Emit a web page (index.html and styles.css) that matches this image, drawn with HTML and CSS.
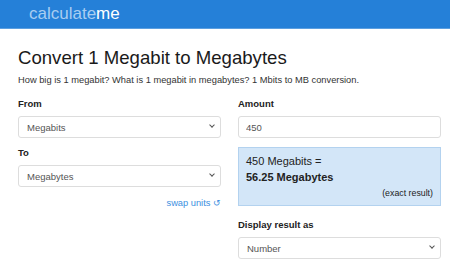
FILE: index.html
```html
<!DOCTYPE html>
<html lang="en">
<head>
  <meta charset="UTF-8" />
  <title>Convert 1 Megabit to Megabytes</title>
  <link rel="stylesheet" href="styles.css">
</head>
<body>
  <header class="topbar">
    <a href="#" class="logo"><span class="logo-light">calculate</span>me</a>
  </header>

  <main class="page">
    <h1 class="title">Convert 1 Megabit to Megabytes</h1>
    <p class="lead">How big is 1 megabit? What is 1 megabit in megabytes? 1 Mbits to MB conversion.</p>

    <div class="converter">
      <div class="col">
        <label class="field-label">From</label>
        <div class="select-wrap">
          <select class="control">
            <option>Megabits</option>
          </select>
        </div>

        <label class="field-label">To</label>
        <div class="select-wrap">
          <select class="control">
            <option>Megabytes</option>
          </select>
        </div>

        <a href="#" class="swap">swap units &#x21BA;</a>
      </div>

      <div class="col">
        <label class="field-label">Amount</label>
        <input class="control control-input" type="text" value="450" />

        <div class="result">
          <div class="result-from">450 Megabits =</div>
          <div class="result-to">56.25 Megabytes</div>
          <div class="result-note">(exact result)</div>
        </div>

        <label class="field-label">Display result as</label>
        <div class="select-wrap">
          <select class="control">
            <option>Number</option>
          </select>
        </div>
      </div>
    </div>
  </main>
</body>
</html>
```

FILE: styles.css
```css
body {
  margin: 0;
  font-family: 'Liberation Sans', Arial, sans-serif;
  color: #222;
  background: #fff;
}

.topbar {
  background: #2580d8;
  height: 28px;
  border-bottom: 1px solid #5c9fe0;
  padding-left: 29px;
  display: flex;
  align-items: center;
}

.logo {
  font-size: 17px;
  color: #fff;
  text-decoration: none;
  line-height: 28px;
  margin-top: -1px;
}

.logo-light {
  color: #a8cdf1;
}

.page {
  padding: 0 9px 0 18px;
}

.title {
  font-size: 18.6px;
  line-height: 22px;
  font-weight: normal;
  margin: 18px 0 5px;
  color: #1a1a1a;
}

.lead {
  font-size: 9.3px;
  line-height: 12px;
  color: #333;
  margin: 0 0 12px;
}

.converter {
  display: grid;
  grid-template-columns: 1fr 1fr;
  gap: 17px;
}

.col {
  display: flex;
  flex-direction: column;
}

.field-label {
  font-size: 9.5px;
  line-height: 12px;
  font-weight: bold;
  color: #222;
  margin-bottom: 6px;
}

.select-wrap {
  position: relative;
  display: flex;
  flex-direction: column;
}

.select-wrap::after {
  content: "";
  position: absolute;
  right: 7px;
  top: 7px;
  width: 3px;
  height: 3px;
  border-right: 1.5px solid #555;
  border-bottom: 1.5px solid #555;
  transform: rotate(45deg);
  pointer-events: none;
}

.control {
  box-sizing: border-box;
  height: 22px;
  border: 1px solid #ddd;
  border-radius: 3px;
  background: #fff;
  font-family: inherit;
  font-size: 9.5px;
  color: #555;
  padding: 0 8px;
  margin-bottom: 9px;
  appearance: none;
  -webkit-appearance: none;
}

.control-input {
  padding: 0 7px;
}

.swap {
  align-self: flex-end;
  font-size: 9.3px;
  line-height: 12px;
  color: #3d8fe0;
  text-decoration: none;
  margin-top: 1px;
}

.result {
  box-sizing: border-box;
  height: 59px;
  background: #d3e6f8;
  border: 1px solid #b3d2ef;
  padding: 5px 7px 0;
  margin-bottom: 13px;
  font-size: 11px;
  color: #222;
}

.result-from {
  line-height: 16px;
}

.result-to {
  font-weight: bold;
  line-height: 16px;
}

.result-note {
  text-align: right;
  font-size: 8.8px;
  line-height: 12px;
  margin-top: 2px;
}
```
